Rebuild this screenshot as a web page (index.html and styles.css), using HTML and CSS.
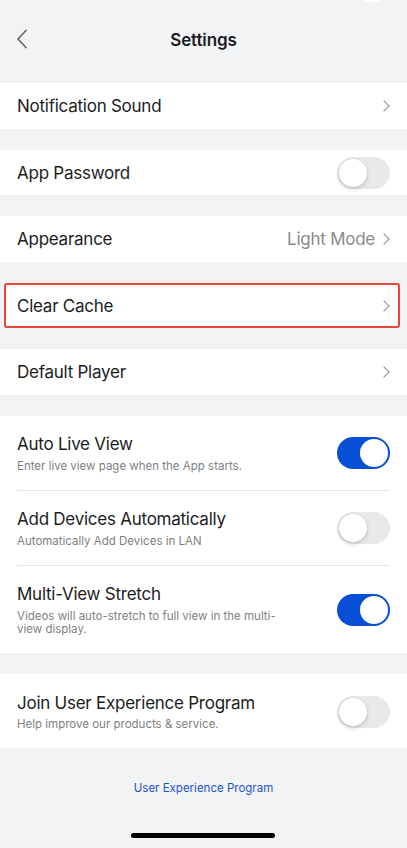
FILE: index.html
```html
<!DOCTYPE html>
<html>
<head>
<meta charset="utf-8">
<link rel="stylesheet" href="styles.css">
</head>
<body>
<div class="screen">
  <div class="status-mark"></div>
  <header class="nav">
    <svg class="back" width="12" height="20" viewBox="0 0 12 20"><path d="M10 1.5 L2 10 L10 18.5" fill="none" stroke="#6b6b6e" stroke-width="1.8" stroke-linecap="round" stroke-linejoin="round"/></svg>
    <h1 class="title">Settings</h1>
  </header>

  <section class="group">
    <div class="row"><span class="label">Notification Sound</span><span class="chev"></span></div>
  </section>
  <section class="group">
    <div class="row"><span class="label">App Password</span><span class="toggle"></span></div>
  </section>
  <section class="group">
    <div class="row"><span class="label">Appearance</span><span class="trail"><span class="value">Light Mode</span><span class="chev"></span></span></div>
  </section>
  <section class="group highlight">
    <div class="row"><span class="label">Clear Cache</span><span class="chev"></span></div>
  </section>
  <section class="group">
    <div class="row"><span class="label">Default Player</span><span class="chev"></span></div>
  </section>

  <section class="group">
    <div class="item">
      <div class="text"><div class="label">Auto Live View</div><div class="sub">Enter live view page when the App starts.</div></div>
      <span class="toggle on"></span>
    </div>
    <div class="item">
      <div class="text"><div class="label">Add Devices Automatically</div><div class="sub">Automatically Add Devices in LAN</div></div>
      <span class="toggle"></span>
    </div>
    <div class="item">
      <div class="text"><div class="label">Multi-View Stretch</div><div class="sub narrow">Videos will auto-stretch to full view in the multi-view display.</div></div>
      <span class="toggle on"></span>
    </div>
  </section>

  <section class="group">
    <div class="item">
      <div class="text"><div class="label">Join User Experience Program</div><div class="sub">Help improve our products &amp; service.</div></div>
      <span class="toggle"></span>
    </div>
  </section>

  <div class="link">User Experience Program</div>
  <div class="home"></div>
</div>
</body>
</html>
```

FILE: styles.css
```css
* { box-sizing: border-box; }
html, body { margin: 0; padding: 0; }
body {
  background: #f2f3f5;
  font-family: Inter, "Noto Sans", sans-serif;
  color: #1c1c1e;
}
.screen {
  position: relative;
  width: 407px;
  height: 848px;
  overflow: hidden;
}
.status-mark {
  position: absolute;
  top: 0;
  left: 364px;
  width: 17px;
  height: 2px;
  background: #fff;
}
.nav {
  height: 83px;
  position: relative;
  display: flex;
  align-items: center;
  justify-content: center;
  padding-bottom: 4px;
}
.back {
  position: absolute;
  left: 16px;
  top: 29px;
}
.title {
  margin: 0;
  font-size: 17px;
  font-weight: 600;
  letter-spacing: -0.1px;
  color: #1c1c1e;
}
.group {
  background: #fff;
  margin-bottom: 21px;
}
.group.highlight {
  margin-left: 4px;
  margin-right: 7px;
  border: 2px solid #e8453c;
  border-radius: 3px;
}
.group.highlight .row {
  padding-left: 11px;
  padding-right: 8px;
  height: 41.5px;
}
.row {
  height: 45.5px;
  display: flex;
  align-items: center;
  justify-content: space-between;
  padding: 1px 17px 0;
}
.label {
  font-size: 17px;
  line-height: 22px;
  letter-spacing: -0.25px;
  color: #1c1c1e;
}
.trail {
  display: flex;
  align-items: center;
  gap: 6px;
}
.value {
  font-size: 17px;
  letter-spacing: -0.25px;
  color: #8a8a8e;
}
.chev {
  width: 9px;
  height: 13px;
  position: relative;
  flex: none;
}
.chev::before {
  content: "";
  position: absolute;
  left: -1px;
  top: 2.5px;
  width: 7px;
  height: 7px;
  border-right: 1.5px solid #8e8e93;
  border-top: 1.5px solid #8e8e93;
  transform: rotate(45deg);
}
.item {
  display: flex;
  align-items: center;
  justify-content: space-between;
  margin: 0 17px;
  padding: 17.5px 0 16.5px;
  border-bottom: 1px solid #e6e6e8;
}
.item:last-child { border-bottom: none; }
.sub {
  margin-top: 4.5px;
  font-size: 11.5px;
  line-height: 13.5px;
  color: #7f7f83;
}
.sub.narrow { width: 268px; }
.toggle {
  flex: none;
  width: 53px;
  height: 32px;
  border-radius: 16px;
  background: #e9e9eb;
  position: relative;
}
.toggle::after {
  content: "";
  position: absolute;
  top: 2px;
  left: 2px;
  width: 28px;
  height: 28px;
  border-radius: 50%;
  background: #fff;
  box-shadow: 0 2px 4px rgba(0,0,0,0.18), 0 0 1px rgba(0,0,0,0.15);
}
.toggle.on { background: #0750d6; }
.toggle.on::after {
  left: 23px;
  box-shadow: none;
}
.link {
  text-align: center;
  margin-top: 32px;
  font-size: 11.5px;
  line-height: 16px;
  color: #1a55d0;
}
.home {
  position: absolute;
  left: 131px;
  top: 833px;
  width: 144px;
  height: 5px;
  border-radius: 3px;
  background: #000;
}
```
